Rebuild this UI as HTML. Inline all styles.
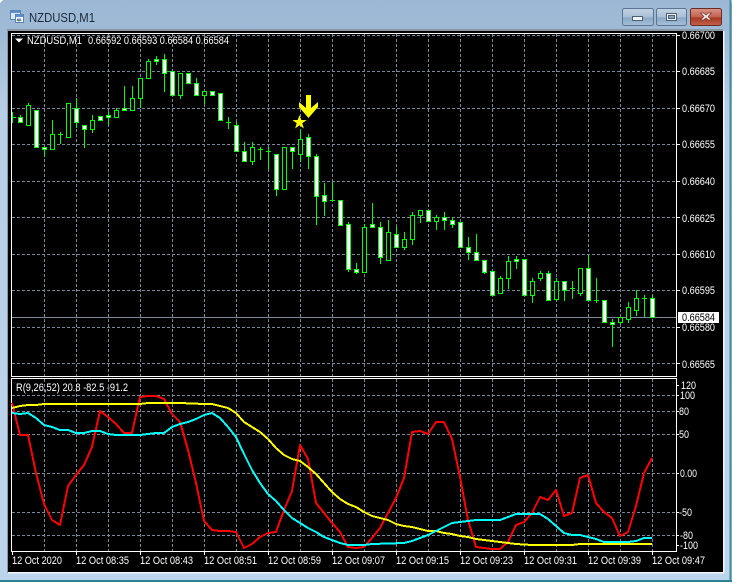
<!DOCTYPE html>
<html><head><meta charset="utf-8"><style>
html,body{margin:0;padding:0;background:#fff;overflow:hidden}
#w{position:absolute;left:0;top:0;width:734px;height:583px;overflow:hidden;background:#fff}
svg{position:absolute;left:0;top:0}
text{font-family:"Liberation Sans",sans-serif;font-size:10.6px;fill:#fff}
</style></head><body><div id="w">
<svg width="734" height="583" viewBox="0 0 734 583">
<defs>
<linearGradient id="t" x1="0" y1="0" x2="0" y2="1"><stop offset="0" stop-color="#9cb8d4"/><stop offset=".06" stop-color="#a0bbd6"/><stop offset=".2" stop-color="#b7cfe6"/><stop offset="1" stop-color="#bcd4ec"/></linearGradient>
<linearGradient id="b" x1="0" y1="0" x2="0" y2="1"><stop offset="0" stop-color="#c3d2e3"/><stop offset=".5" stop-color="#a9bfd6"/><stop offset=".55" stop-color="#8aa8c6"/><stop offset="1" stop-color="#a5c0da"/></linearGradient>
<linearGradient id="c" x1="0" y1="0" x2="0" y2="1"><stop offset="0" stop-color="#d8968a"/><stop offset=".5" stop-color="#c2604e"/><stop offset=".55" stop-color="#a93a24"/><stop offset="1" stop-color="#c4604a"/></linearGradient>
<clipPath id="m"><rect x="12" y="34" width="664" height="342"/></clipPath>
</defs>
<path d="M3 0H729L732 3V581H0V3z" fill="url(#t)"/>
<rect x="729.500" y="0" width="2" height="581" fill="#3f8ea0"/>
<rect x="0" y="580" width="732" height="2" fill="#2d8296"/>
<rect x="7" y="29" width="716" height="2" fill="#8a96a3"/>
<rect x="7" y="29" width="1" height="544" fill="#8a96a3"/>
<rect x="8" y="31" width="715" height="541" fill="#000"/>
<rect x="8" y="572" width="716" height="1.500" fill="#f2f5f8"/>
<rect x="723" y="31" width="1.500" height="542" fill="#f2f5f8"/>
<!-- title icon -->
<rect x="10.500" y="10.500" width="10" height="9" fill="#dbe8f6" stroke="#5b84b5"/>
<rect x="11" y="11" width="9" height="2" fill="#5b8fd0"/>
<rect x="15.500" y="14.500" width="8" height="8" fill="#fff" stroke="#5b84b5"/>
<rect x="16" y="15" width="7" height="2" fill="#5b8fd0"/>
<path d="M17 21l1-2 1 2 1-2 1 2" fill="none" stroke="#466a9a"/>
<text x="29" y="22" textLength="66" lengthAdjust="spacingAndGlyphs" style="font-size:12.500px;fill:#1d2a3c">NZDUSD,M1</text>
<!-- buttons -->
<rect x="622.500" y="8.500" width="31" height="17" rx="2" fill="url(#b)" stroke="#5a7491"/>
<rect x="632.500" y="16.500" width="10" height="4" fill="#f2f5f8" stroke="#4d5f75"/>
<rect x="656.500" y="8.500" width="30" height="17" rx="2" fill="url(#b)" stroke="#5a7491"/>
<rect x="666.500" y="13.500" width="10" height="7" fill="#f2f5f8" stroke="#4d5f75"/>
<rect x="668.500" y="15.500" width="6" height="3" fill="#8aa3bf" stroke="#4d5f75"/>
<rect x="690.500" y="8.500" width="31" height="17" rx="2" fill="url(#c)" stroke="#6b2a22"/>
<path d="M700.500 13l3 0 2.500 2 2.500-2 3 0-3.500 3.500 3.500 3.500-3 0-2.500-2-2.500 2-3 0 3.500-3.500z" fill="#f4eeec" stroke="#7a3a30" stroke-width=".7"/>
<!-- grid main -->
<path shape-rendering="crispEdges" stroke="#778899" stroke-width="1" stroke-dasharray="3 2" fill="none" d="M12 35.500H676M12 71.500H676M12 108.500H676M12 144.500H676M12 181.500H676M12 217.500H676M12 254.500H676M12 290.500H676M12 327.500H676M12 363.500H676M44.500 34V376M76.500 34V376M108.500 34V376M140.500 34V376M172.500 34V376M204.500 34V376M236.500 34V376M268.500 34V376M300.500 34V376M332.500 34V376M364.500 34V376M396.500 34V376M428.500 34V376M460.500 34V376M492.500 34V376M524.500 34V376M556.500 34V376M588.500 34V376M620.500 34V376M652.500 34V376"/>
<path shape-rendering="crispEdges" stroke="#778899" fill="none" d="M12 317.500H676"/>
<!-- candles -->
<g clip-path="url(#m)" shape-rendering="crispEdges">
<path fill="none" stroke="#0f0" d="M12.500 112V123M20.500 115V122M28.500 103V105M44.500 149V157M52.500 120V134M60.500 132V144M76.500 98V128M84.500 129V148M92.500 115V133M108.500 112V125M116.500 108V110M124.500 86V108M132.500 86V98M140.500 98V108M148.500 59V61M156.500 56V65M164.500 54V92M180.500 95V99M196.500 78V83M204.500 95V104M228.500 117V129M236.500 122V125M244.500 142V151M252.500 142V165M260.500 147V160M268.500 147V169M276.500 189V196M292.500 151V169M300.500 129V162M308.500 134V169M316.500 154V225M324.500 183V216M332.500 182V200M348.500 222V272M356.500 263V274M364.500 224V227M372.500 203V224M380.500 222V264M388.500 220V232M396.500 227V234M404.500 232V250M412.500 212V245M420.500 215V223M428.500 221V222M436.500 215V230M444.500 212V230M452.500 217V228M468.500 237V260M476.500 234V252M484.500 272V274M500.500 276V278M508.500 256V289M516.500 256V269M532.500 278V303M540.500 271V281M548.500 271V273M556.500 278V301M564.500 290V301M572.500 281V299M580.500 293V296M588.500 255V268M596.500 278V303M612.500 319V347M620.500 322V324M628.500 302V323M636.500 290V316M644.500 295V317M652.500 295V298M12 117.500H16M58 134.500H63M226 122.500H231M258 149.500H263M266 151.500H271M330 200.500H335M570 288.500H575M594 300.500H599M642 298.500H647"/>
<path fill="#000" stroke="#0f0" d="M26.500 105.500h4v20h-4zM50.500 134.500h4v15h-4zM66.500 103.500h4v34h-4zM90.500 120.500h4v9h-4zM114.500 110.500h4v7h-4zM130.500 98.500h4v12h-4zM138.500 78.500h4v20h-4zM146.500 61.500h4v17h-4zM178.500 73.500h4v22h-4zM202.500 91.500h4v4h-4zM250.500 147.500h4v14h-4zM282.500 147.500h4v42h-4zM298.500 139.500h4v15h-4zM362.500 227.500h4v45h-4zM386.500 232.500h4v28h-4zM402.500 239.500h4v8h-4zM410.500 215.500h4v24h-4zM418.500 210.500h4v5h-4zM434.500 217.500h4v4h-4zM498.500 278.500h4v15h-4zM506.500 261.500h4v17h-4zM530.500 281.500h4v14h-4zM538.500 273.500h4v5h-4zM554.500 281.500h4v18h-4zM578.500 268.500h4v25h-4zM618.500 317.500h4v5h-4zM626.500 307.500h4v12h-4zM634.500 298.500h4v12h-4z"/>
<path fill="#fff" stroke="#0f0" d="M18.500 117.500h4v5h-4zM34.500 110.500h4v37h-4zM42.500 147.500h4v2h-4zM74.500 108.500h4v14h-4zM82.500 125.500h4v4h-4zM98.500 116.500h4v4h-4zM106.500 115.500h4v2h-4zM122.500 108.500h4v2h-4zM154.500 59.500h4v2h-4zM162.500 59.500h4v14h-4zM170.500 71.500h4v24h-4zM186.500 73.500h4v10h-4zM194.500 83.500h4v12h-4zM210.500 91.500h4v4h-4zM218.500 93.500h4v27h-4zM234.500 125.500h4v26h-4zM242.500 151.500h4v10h-4zM274.500 154.500h4v35h-4zM290.500 147.500h4v4h-4zM306.500 137.500h4v19h-4zM314.500 156.500h4v40h-4zM322.500 195.500h4v6h-4zM338.500 200.500h4v25h-4zM346.500 224.500h4v45h-4zM354.500 269.500h4v3h-4zM370.500 224.500h4v3h-4zM378.500 227.500h4v30h-4zM394.500 234.500h4v13h-4zM426.500 210.500h4v11h-4zM442.500 217.500h4v3h-4zM450.500 220.500h4v4h-4zM458.500 222.500h4v25h-4zM466.500 247.500h4v5h-4zM474.500 252.500h4v8h-4zM482.500 260.500h4v12h-4zM490.500 271.500h4v24h-4zM514.500 259.500h4v2h-4zM522.500 259.500h4v36h-4zM546.500 273.500h4v27h-4zM562.500 281.500h4v9h-4zM586.500 268.500h4v32h-4zM602.500 300.500h4v22h-4zM610.500 322.500h4v2h-4zM650.500 298.500h4v19h-4z"/>
</g>
<!-- arrow & star -->
<path fill="#ff0" d="M306 95H311V108L318 102V107L308.500 118L299 107V102L306 108z"/>
<path fill="#ff0" d="M299.500 115L301.300 120H306.600L302.300 123.200L303.900 128.500L299.500 125.300L295.100 128.500L296.700 123.200L292.400 120H297.700z"/>
<!-- frames main -->
<path shape-rendering="crispEdges" fill="none" stroke="#fff" d="M11.500 33.500H676.500V376.500H11.500zM11.500 378.500H676.500V551.500H11.500z"/>
<!-- ticks -->
<path shape-rendering="crispEdges" fill="none" stroke="#fff" d="M677 35.500h3M677 71.500h3M677 108.500h3M677 144.500h3M677 181.500h3M677 217.500h3M677 254.500h3M677 290.500h3M677 327.500h3M677 363.500h3M677 385.500h2M677 395.500h2M677 411.500h2M677 434.500h2M677 473.500h2M677 512.500h2M677 535.500h2M677 545.500h2M12.500 552v3M76.500 552v3M140.500 552v3M204.500 552v3M268.500 552v3M332.500 552v3M396.500 552v3M460.500 552v3M524.500 552v3M588.500 552v3M652.500 552v3"/>
<!-- grid indicator -->
<path shape-rendering="crispEdges" stroke="#778899" stroke-dasharray="3 2" fill="none" d="M12 395.500H676M12 411.500H676M12 434.500H676M12 473.500H676M12 512.500H676M12 535.500H676M44.500 379V551M76.500 379V551M108.500 379V551M140.500 379V551M172.500 379V551M204.500 379V551M236.500 379V551M268.500 379V551M300.500 379V551M332.500 379V551M364.500 379V551M396.500 379V551M428.500 379V551M460.500 379V551M492.500 379V551M524.500 379V551M556.500 379V551M588.500 379V551M620.500 379V551M652.500 379V551"/>
<!-- indicator lines -->
<g fill="none" stroke-width="2" stroke-linejoin="round" shape-rendering="crispEdges">
<polyline stroke="#f00" points="12,403 20,435 28,435 36,473 44,504 52,520 60,525 68,486 76,475 84,465 92,447 100,411 108,417 116,424 124,433 132,433 140,397 148,396 156,396 164,399 172,414 180,422 188,450 196,483 204,521 212,530 220,531 228,531 236,532 244,548 252,544 260,537 268,533 276,532 284,510 292,491 300,445 308,459 316,503 324,513 332,523 340,532 348,547 356,548 364,547 372,538 380,528 388,513 396,498 404,478 412,432 420,431 428,434 436,422 444,422 452,439 460,477 468,520 476,547 484,548 492,549 500,549 508,542 516,525 524,522 532,513 540,497 548,500 556,490 564,516 572,513 580,478 588,475 596,503 604,512 612,518 620,536 628,532 636,506 644,473 652,458"/>
<polyline stroke="#ff0" points="12,408 20,406 28,405 36,405 44,404 52,404 100,404 140,404 148,403 172,403 180,403 204,404 212,404 220,406 228,408 236,413 244,422 252,427 260,432 268,439 276,448 284,455 292,459 300,461 308,467 316,474 324,483 332,492 340,499 348,504 356,507 364,512 372,516 380,518 388,520 396,524 404,526 412,527 420,529 428,531 436,531 444,533 452,534 460,536 468,537 476,539 484,540 492,541 500,542 508,543 516,544 532,545 548,545 572,545 580,544 652,544"/>
<polyline stroke="#0ff" points="12,413 20,414 28,413 36,418 44,425 52,427 60,430 68,430 76,433 84,433 92,431 100,431 108,434 116,435 124,435 140,435 148,434 156,433 164,433 172,427 180,424 188,422 196,419 204,415 212,413 220,418 228,427 236,437 244,454 252,470 260,483 268,494 276,501 284,510 292,518 300,523 308,528 316,532 324,537 332,540 340,543 348,545 364,545 372,544 404,543 412,541 420,538 428,535 436,531 444,527 452,523 460,522 468,521 476,520 484,520 500,520 508,517 516,514 540,514 548,519 556,526 564,533 572,535 580,535 588,537 596,539 604,542 628,542 636,541 644,538 652,538"/>
</g>
<!-- labels -->
<path d="M15 38.500h8l-4 4z" fill="#fff"/>
<text x="27" y="44" textLength="55" lengthAdjust="spacingAndGlyphs">NZDUSD,M1</text>
<text x="88" y="44" textLength="141" lengthAdjust="spacingAndGlyphs">0.66592 0.66593 0.66584 0.66584</text>
<text x="16" y="391" textLength="112" lengthAdjust="spacingAndGlyphs">R(9,26,52) 20.8 -82.5 -91.2</text>
<text x="682" y="39" textLength="33" lengthAdjust="spacingAndGlyphs">0.66700</text>
<text x="682" y="75" textLength="33" lengthAdjust="spacingAndGlyphs">0.66685</text>
<text x="682" y="112" textLength="33" lengthAdjust="spacingAndGlyphs">0.66670</text>
<text x="682" y="148" textLength="33" lengthAdjust="spacingAndGlyphs">0.66655</text>
<text x="682" y="185" textLength="33" lengthAdjust="spacingAndGlyphs">0.66640</text>
<text x="682" y="222" textLength="33" lengthAdjust="spacingAndGlyphs">0.66625</text>
<text x="682" y="258" textLength="33" lengthAdjust="spacingAndGlyphs">0.66610</text>
<text x="682" y="294" textLength="33" lengthAdjust="spacingAndGlyphs">0.66595</text>
<text x="682" y="331" textLength="33" lengthAdjust="spacingAndGlyphs">0.66580</text>
<text x="682" y="368" textLength="33" lengthAdjust="spacingAndGlyphs">0.66565</text>
<rect x="678" y="312" width="41" height="11" fill="#fff"/>
<text x="682" y="321" textLength="33" lengthAdjust="spacingAndGlyphs" style="fill:#000">0.66584</text>
<text x="681" y="389" textLength="15" lengthAdjust="spacingAndGlyphs">120</text>
<text x="680" y="399" textLength="15" lengthAdjust="spacingAndGlyphs">100</text>
<text x="679" y="415" textLength="10" lengthAdjust="spacingAndGlyphs">80</text>
<text x="679" y="438" textLength="10" lengthAdjust="spacingAndGlyphs">50</text>
<text x="680" y="477" textLength="17" lengthAdjust="spacingAndGlyphs">0.00</text>
<text x="679" y="516" textLength="13" lengthAdjust="spacingAndGlyphs">-50</text>
<text x="680" y="539" textLength="13" lengthAdjust="spacingAndGlyphs">-80</text>
<text x="680" y="549" textLength="18" lengthAdjust="spacingAndGlyphs">-100</text>
<text x="12" y="564" textLength="50" lengthAdjust="spacingAndGlyphs">12 Oct 2020</text>
<text x="76" y="564" textLength="53" lengthAdjust="spacingAndGlyphs">12 Oct 08:35</text>
<text x="140" y="564" textLength="53" lengthAdjust="spacingAndGlyphs">12 Oct 08:43</text>
<text x="204" y="564" textLength="53" lengthAdjust="spacingAndGlyphs">12 Oct 08:51</text>
<text x="268" y="564" textLength="53" lengthAdjust="spacingAndGlyphs">12 Oct 08:59</text>
<text x="332" y="564" textLength="53" lengthAdjust="spacingAndGlyphs">12 Oct 09:07</text>
<text x="396" y="564" textLength="53" lengthAdjust="spacingAndGlyphs">12 Oct 09:15</text>
<text x="460" y="564" textLength="53" lengthAdjust="spacingAndGlyphs">12 Oct 09:23</text>
<text x="524" y="564" textLength="53" lengthAdjust="spacingAndGlyphs">12 Oct 09:31</text>
<text x="588" y="564" textLength="53" lengthAdjust="spacingAndGlyphs">12 Oct 09:39</text>
<text x="652" y="564" textLength="53" lengthAdjust="spacingAndGlyphs">12 Oct 09:47</text>
</svg>
</div></body></html>
